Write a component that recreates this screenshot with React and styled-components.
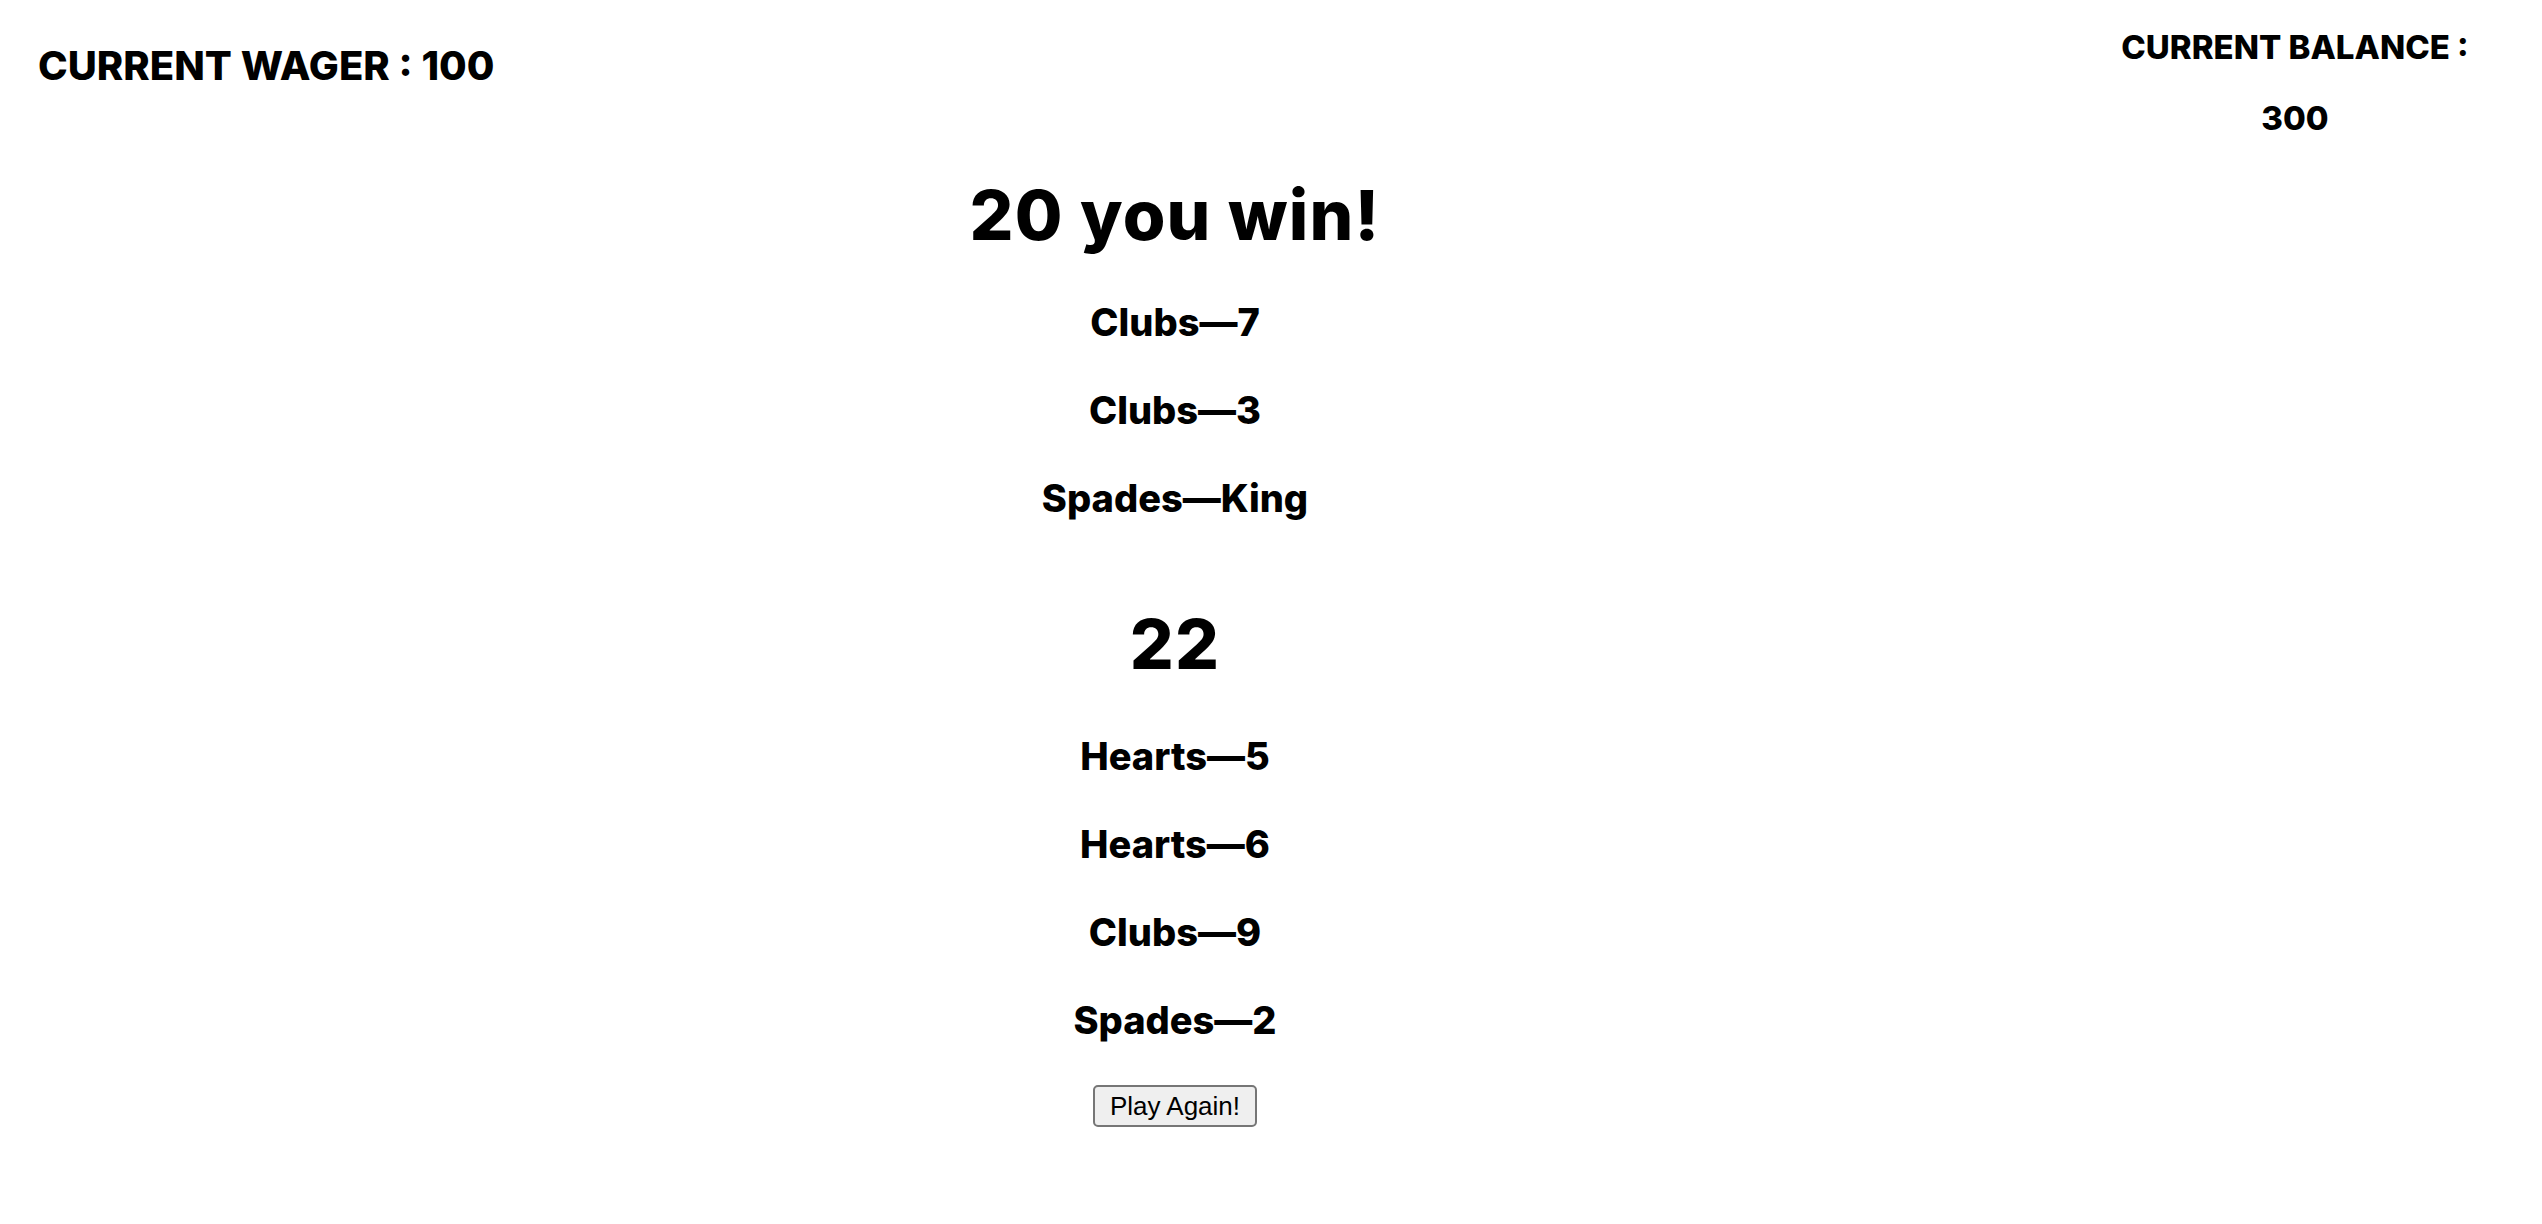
import styled, { createGlobalStyle } from "styled-components";

const GlobalStyle = createGlobalStyle`
    body {
        margin: 0;
        background: #ffffff;
        color: #000000;
        font-family: "Inter", "Lato", sans-serif;
    }
`

const Page = styled.div`
    display: grid;
    grid-template-columns: 560px 1230px 1fr;
    align-items: start;
    min-height: 1224px;
`

const Wager = styled.h2`
    margin: 46px 0 0 38px;
    font-size: 40px;
    line-height: 40px;
    font-weight: 800;
    text-transform: uppercase;
    white-space: nowrap;
`

const Balance = styled.div`
    justify-self: end;
    width: 494px;
    padding-top: 31px;
    display: flex;
    flex-direction: column;
    align-items: center;
    gap: 38px;

    h3 {
        margin: 0;
        font-size: 33px;
        line-height: 33px;
        font-weight: 800;
        text-transform: uppercase;
        white-space: nowrap;
    }
`

const Game = styled.main`
    display: flex;
    flex-direction: column;
    align-items: center;
    padding-top: 181px;
`

const Total = styled.h1`
    margin: 0 0 ${(p) => p.$after}px;
    font-size: 69px;
    line-height: 69px;
    font-weight: 800;
    letter-spacing: 1.2px;
    white-space: nowrap;
`

const Hand = styled.div`
    display: flex;
    flex-direction: column;
    align-items: center;
    gap: 50px;
    margin-bottom: ${(p) => p.$after}px;
`

const Card = styled.h2`
    margin: 0;
    font-size: 38px;
    line-height: 38px;
    font-weight: 800;
    white-space: nowrap;
`

const PlayButton = styled.button`
    height: 42px;
    padding: 0 15px;
    border: 2px solid #767676;
    border-radius: 5px;
    background: #efefef;
    color: #000000;
    font-family: "Liberation Sans", Arial, sans-serif;
    font-size: 26px;
    line-height: 1;
    cursor: pointer;
`

const dealer = ["Clubs—7", "Clubs—3", "Spades—King"];
const player = ["Hearts—5", "Hearts—6", "Clubs—9", "Spades—2"];

export default function App() {
    return (
        <>
            <GlobalStyle />
            <Page>
                <Wager>Current Wager : 100</Wager>
                <Game>
                    <Total $after={53}>20 you win!</Total>
                    <Hand $after={93}>
                        {dealer.map((c) => <Card key={c}>{c}</Card>)}
                    </Hand>
                    <Total $after={58}>22</Total>
                    <Hand $after={46}>
                        {player.map((c) => <Card key={c}>{c}</Card>)}
                    </Hand>
                    <PlayButton>Play Again!</PlayButton>
                </Game>
                <Balance>
                    <h3>Current Balance :</h3>
                    <h3>300</h3>
                </Balance>
            </Page>
        </>
    )
}
